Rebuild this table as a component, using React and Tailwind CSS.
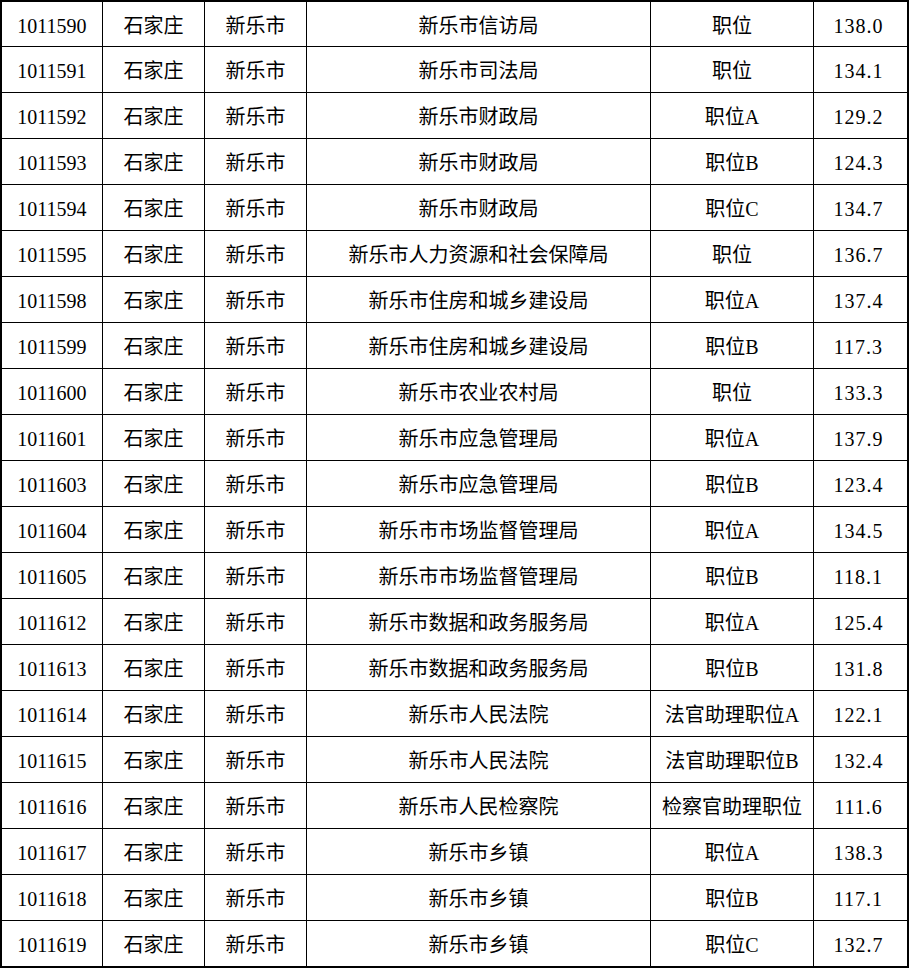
import React from "react";

// 职位表：代码 / 市 / 县 / 单位 / 职位 / 分数
const rows = [
  ["1011590", "石家庄", "新乐市", "新乐市信访局", "职位", "138.0"],
  ["1011591", "石家庄", "新乐市", "新乐市司法局", "职位", "134.1"],
  ["1011592", "石家庄", "新乐市", "新乐市财政局", "职位A", "129.2"],
  ["1011593", "石家庄", "新乐市", "新乐市财政局", "职位B", "124.3"],
  ["1011594", "石家庄", "新乐市", "新乐市财政局", "职位C", "134.7"],
  ["1011595", "石家庄", "新乐市", "新乐市人力资源和社会保障局", "职位", "136.7"],
  ["1011598", "石家庄", "新乐市", "新乐市住房和城乡建设局", "职位A", "137.4"],
  ["1011599", "石家庄", "新乐市", "新乐市住房和城乡建设局", "职位B", "117.3"],
  ["1011600", "石家庄", "新乐市", "新乐市农业农村局", "职位", "133.3"],
  ["1011601", "石家庄", "新乐市", "新乐市应急管理局", "职位A", "137.9"],
  ["1011603", "石家庄", "新乐市", "新乐市应急管理局", "职位B", "123.4"],
  ["1011604", "石家庄", "新乐市", "新乐市市场监督管理局", "职位A", "134.5"],
  ["1011605", "石家庄", "新乐市", "新乐市市场监督管理局", "职位B", "118.1"],
  ["1011612", "石家庄", "新乐市", "新乐市数据和政务服务局", "职位A", "125.4"],
  ["1011613", "石家庄", "新乐市", "新乐市数据和政务服务局", "职位B", "131.8"],
  ["1011614", "石家庄", "新乐市", "新乐市人民法院", "法官助理职位A", "122.1"],
  ["1011615", "石家庄", "新乐市", "新乐市人民法院", "法官助理职位B", "132.4"],
  ["1011616", "石家庄", "新乐市", "新乐市人民检察院", "检察官助理职位", "111.6"],
  ["1011617", "石家庄", "新乐市", "新乐市乡镇", "职位A", "138.3"],
  ["1011618", "石家庄", "新乐市", "新乐市乡镇", "职位B", "117.1"],
  ["1011619", "石家庄", "新乐市", "新乐市乡镇", "职位C", "132.7"],
];

const widths = ["w-[100px]", "w-[102px]", "w-[102px]", "w-[344px]", "w-[163px]", "w-[94px]"];

const App = () => {
  return (
    <div
      className="w-[909px] bg-white text-black text-[20px] leading-none"
      style={{ fontFamily: '"Liberation Serif", "Noto Sans CJK SC", serif' }}
    >
      <div className="border-2 border-black">
        {rows.map((row, i) => (
          <div
            key={row[0]}
            className={
              i === 0 ? "flex h-[44px]" : "flex h-[46px] border-t border-black"
            }
          >
            {row.map((cell, j) => (
              <div
                key={j}
                className={
                  "flex shrink-0 items-center justify-center whitespace-nowrap pt-[3px] " +
                  widths[j] +
                  (j > 0 ? " border-l border-black" : "") +
                  (j === 5 ? " tracking-[1px] pr-[4px]" : "")
                }
              >
                {cell}
              </div>
            ))}
          </div>
        ))}
      </div>
    </div>
  );
};

export default App;
